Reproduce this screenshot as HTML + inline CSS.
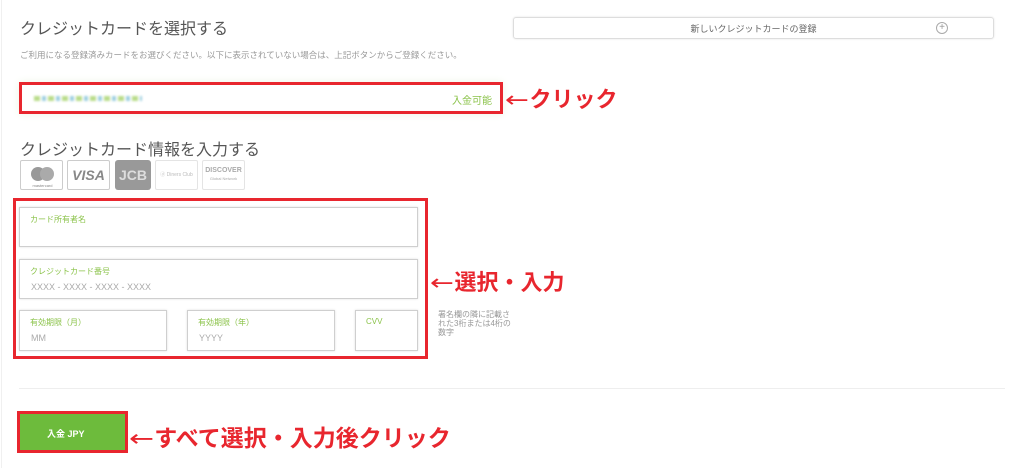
<!DOCTYPE html>
<html><head><meta charset="utf-8"><style>
*{margin:0;padding:0;box-sizing:border-box}
body{width:1024px;height:468px;background:#fff;position:relative;overflow:hidden;font-family:"Liberation Sans","Noto Sans CJK JP",sans-serif;color:#555}
.a{position:absolute}
.h{font-size:16px;color:#555;white-space:nowrap}
.red{color:#e8262e;font-weight:bold;white-space:nowrap}
.red .ar{font-family:"DejaVu Sans",sans-serif;font-weight:normal;display:inline-block;transform:scaleX(1.3);transform-origin:left;margin-right:6px}
.inp{position:absolute;border:1px solid #cfcfcf;box-shadow:0 0 2px #ddd}
.lab{position:absolute;left:10px;top:6px;font-size:8px;color:#8bc34a;white-space:nowrap}
.ph{position:absolute;left:11px;top:22px;font-size:9px;color:#aaa;white-space:nowrap}
.card{position:absolute;top:160px;height:30px;border:1px solid #ccc;border-radius:2px;background:#fff}
</style></head><body>
<div class="a" style="left:1px;top:0;width:1px;height:468px;background:#f0f0f0"></div>
<div class="a h" style="left:20px;top:15px">クレジットカードを選択する</div>
<div class="a" style="left:513px;top:17px;width:481px;height:22px;border:1px solid #ddd;border-radius:3px;box-shadow:0 0 2px #e5e5e5">
  <div class="a" style="left:0;width:100%;top:4px;text-align:center;font-size:9px;color:#666">新しいクレジットカードの登録</div>
  <div class="a" style="left:422px;top:4px;width:12px;height:12px;border:1px solid #aaa;border-radius:50%;font-size:10px;line-height:10px;text-align:center;color:#999">+</div>
</div>
<div class="a" style="left:20px;top:49px;font-size:8.5px;color:#999;white-space:nowrap">ご利用になる登録済みカードをお選びください。以下に表示されていない場合は、上記ボタンからご登録ください。</div>
<div class="a" style="left:19px;top:82px;width:484px;height:32px;border:3px solid #e8262e;box-shadow:0 0 8px #eef5e6">
  <div class="a" style="left:12px;top:11px;width:108px;height:5px;background:repeating-linear-gradient(90deg,#b9dc8a 0 6px,#fff 6px 8px,#9fd0e0 8px 12px,#fff 12px 14px);filter:blur(1px)"></div>
  <div class="a" style="right:8px;top:7px;font-size:10px;color:#8bc34a">入金可能</div>
</div>
<div class="a red" style="left:505px;top:82px;font-size:22px"><span class="ar">←</span>クリック</div>
<div class="a h" style="left:20px;top:136px">クレジットカード情報を入力する</div>
<div class="card" style="left:20px;width:43px"><svg width="43" height="30"><circle cx="17" cy="13" r="7" fill="#999"/><circle cx="26" cy="13" r="7" fill="#aaa"/><text x="21.5" y="26" font-size="4" text-anchor="middle" fill="#888" font-family="Liberation Sans">mastercard</text></svg></div>
<div class="card" style="left:67px;width:43px;text-align:center;font-size:14px;font-weight:bold;font-style:italic;color:#888;line-height:28px">VISA</div>
<div class="a" style="left:115px;top:160px;width:36px;height:30px;background:#999;border-radius:3px;color:#ddd;font-weight:bold;font-size:14px;line-height:30px;text-align:center">JCB</div>
<div class="card" style="left:155px;width:43px;border-color:#e4e4e4;font-size:5px;color:#bbb;line-height:28px;text-align:center">ⓓ Diners Club</div>
<div class="card" style="left:202px;width:43px;border-color:#e4e4e4;font-size:7px;color:#aaa;font-weight:bold;text-align:center;padding-top:6px;line-height:8px">DISCOVER<br><span style="font-size:4px;font-weight:normal">Global Network</span></div>
<div class="a" style="left:13px;top:198px;width:415px;height:161px;border:3px solid #e8262e"></div>
<div class="inp" style="left:19px;top:207px;width:399px;height:40px"><div class="lab">カード所有者名</div></div>
<div class="inp" style="left:19px;top:259px;width:399px;height:40px"><div class="lab">クレジットカード番号</div><div class="ph">XXXX - XXXX - XXXX - XXXX</div></div>
<div class="inp" style="left:19px;top:310px;width:148px;height:41px"><div class="lab">有効期限（月）</div><div class="ph">MM</div></div>
<div class="inp" style="left:187px;top:310px;width:148px;height:41px"><div class="lab">有効期限（年）</div><div class="ph">YYYY</div></div>
<div class="inp" style="left:355px;top:310px;width:63px;height:41px"><div class="lab">CVV</div></div>
<div class="a red" style="left:430px;top:265px;font-size:22px"><span class="ar">←</span>選択・入力</div>
<div class="a" style="left:438px;top:310px;width:78px;font-size:8px;line-height:9px;color:#999">署名欄の隣に記載された3桁または4桁の数字</div>
<div class="a" style="left:19px;top:388px;width:986px;height:1px;background:#eee"></div>
<div class="a" style="left:17px;top:411px;width:111px;height:42px;border:3px solid #e8262e;background:#6dbb3c">
  <div class="a" style="left:27px;top:13px;font-size:9px;font-weight:bold;color:#fff;white-space:nowrap">入金 JPY</div>
</div>
<div class="a red" style="left:129px;top:419px;font-size:23px"><span class="ar">←</span>すべて選択・入力後クリック</div>
</body></html>
